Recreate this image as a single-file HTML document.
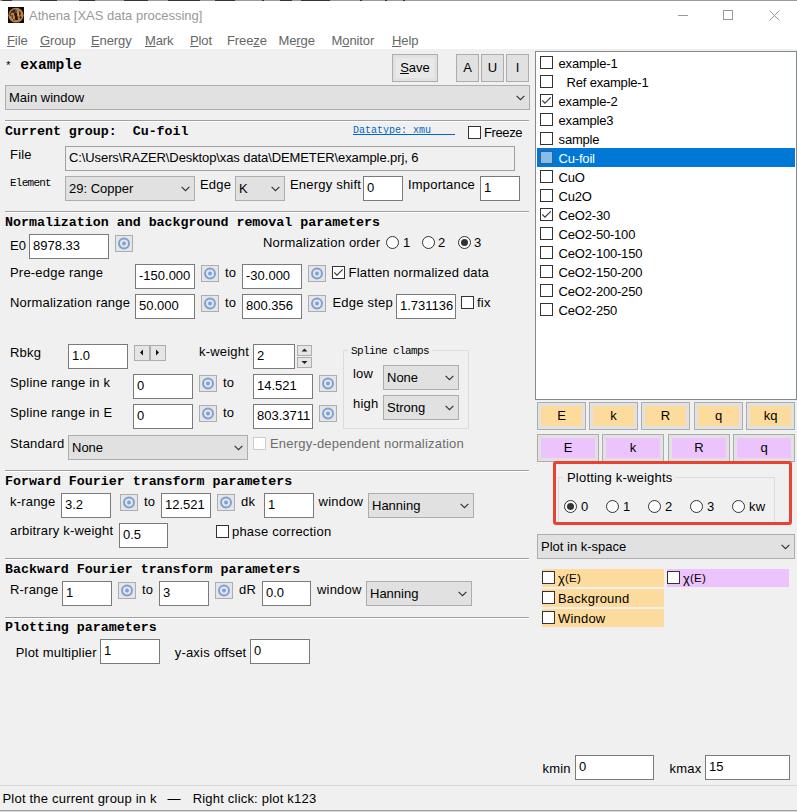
<!DOCTYPE html><html><head><meta charset="utf-8"><style>
*{box-sizing:border-box;margin:0;padding:0}
html,body{width:797px;height:812px;overflow:hidden;background:#f0f0f0}
body{position:relative;font-family:"Liberation Sans",sans-serif;font-size:13px;color:#000}
.a{position:absolute}
.t{position:absolute;white-space:pre;line-height:15px;height:15px;letter-spacing:0.2px}
.m{position:absolute;white-space:pre;font-family:"Liberation Mono",monospace;font-weight:bold;font-size:13.3px;line-height:15px}
.s{position:absolute;white-space:pre;font-family:"Liberation Mono",monospace;font-size:10px;line-height:12px}
.tb{position:absolute;background:#fff;border:1px solid #7a7a7a}
.tb span{position:absolute;left:3px;white-space:pre;line-height:15px;letter-spacing:0}
.cb{position:absolute;background:#e1e1e1;border:1px solid #adadad}
.cb span{position:absolute;left:3px;white-space:pre;line-height:15px}
.cb svg{position:absolute;right:6px;top:9px}
.pk{position:absolute;width:18px;height:17px;background:#e5e5e5;border:1px solid #adadad}
.pk svg{position:absolute;left:1px;top:1px}
.ck{position:absolute;width:13px;height:13px;background:#fff;border:1px solid #333}
.ck svg{position:absolute;left:-1px;top:-1px}
.rd{position:absolute;width:13px;height:13px;border-radius:50%;background:#fff;border:1px solid #333}
.rd i{position:absolute;left:2px;top:2px;width:7px;height:7px;border-radius:50%;background:#333}
.sep{position:absolute;height:2px;border-top:1px solid #a0a0a0;border-bottom:1px solid #fff}
.bt{position:absolute;background:#e1e1e1;border:1px solid #adadad;text-align:center}
.pb{position:absolute;border:1px solid #adadad;background:#e1e1e1}
.pb div{position:absolute;left:3px;top:3px;right:3px;bottom:3px;text-align:center;line-height:19px}
</style></head><body>
<div class="a" style="left:0;top:0;width:797px;height:49px;background:#fff"></div>
<div class="a" style="left:0;top:0;width:797px;height:1px;background:#9a9a9a"></div>
<div class="a" style="left:2px;top:0;width:10px;height:1px;background:#333"></div>
<div class="a" style="left:40px;top:0;width:17px;height:1px;background:#333"></div>
<div class="a" style="left:79px;top:0;width:16px;height:1px;background:#333"></div>
<div class="a" style="left:124px;top:0;width:24px;height:1px;background:#333"></div>
<div class="a" style="left:168px;top:0;width:32px;height:1px;background:#333"></div>
<div class="a" style="left:215px;top:0;width:20px;height:1px;background:#333"></div>
<div class="a" style="left:262px;top:0;width:2px;height:1px;background:#333"></div>
<div class="a" style="left:280px;top:0;width:12px;height:1px;background:#333"></div>
<div class="a" style="left:301px;top:0;width:29px;height:1px;background:#333"></div>
<div class="a" style="left:360px;top:0;width:2px;height:1px;background:#333"></div>
<div class="a" style="left:385px;top:0;width:2px;height:1px;background:#333"></div>
<div class="a" style="left:403px;top:0;width:2px;height:1px;background:#333"></div>
<svg class="a" style="left:8px;top:7px" width="16" height="16" viewBox="0 0 16 16"><rect width="16" height="16" fill="#0d0b0a"/><ellipse cx="8" cy="8.2" rx="7.6" ry="7.4" fill="#bb7f4a"/><path d="M2.2 9 A6 6 0 0 1 8 2.6" fill="none" stroke="#4a3020" stroke-width="1.2"/><path d="M12.5 12 L11 10 L13 9 L13.8 11 Z" fill="#3a2616"/><path d="M5 12 L6.5 12 L6.5 14 L5 13.5Z" fill="#6a4428"/><path d="M3 5 L6 3 L9 3 L9 5 L7 6 L5 6 Z" fill="#3a2616"/><path d="M6.5 6 L9.5 6 L9.5 8 L10 13 L7 13 L7 9 L6 8 Z" fill="#24170c"/><path d="M3.5 8 L5 8 L5 12 L3.8 11 Z" fill="#5a3a20"/><path d="M11 4 L13 6 L12 9 L11 8 Z" fill="#3a2616"/><path d="M9.5 6 L11 6 L11 9 L9.5 9 Z" fill="#e0a868"/><path d="M7.5 2.5 L8.5 2.5 L8.5 5 L7.5 5 Z" fill="#7a7890"/></svg>
<div class="t" style="left:29px;top:8px;color:#999;letter-spacing:0">Athena [XAS data processing]</div>
<div class="a" style="left:678px;top:15px;width:10px;height:1px;background:#999"></div>
<div class="a" style="left:723px;top:10px;width:10px;height:10px;border:1px solid #999"></div>
<svg class="a" style="left:769px;top:10px" width="11" height="11" viewBox="0 0 11 11"><path d="M0.5 0.5 L10.5 10.5 M10.5 0.5 L0.5 10.5" stroke="#999" stroke-width="1"/></svg>
<div class="t" style="left:7px;top:33px;color:#666;letter-spacing:-0.1px"><u>F</u>ile</div>
<div class="t" style="left:40px;top:33px;color:#666;letter-spacing:-0.1px"><u>G</u>roup</div>
<div class="t" style="left:91px;top:33px;color:#666;letter-spacing:-0.1px"><u>E</u>nergy</div>
<div class="t" style="left:145px;top:33px;color:#666;letter-spacing:-0.1px"><u>M</u>ark</div>
<div class="t" style="left:190px;top:33px;color:#666;letter-spacing:-0.1px"><u>P</u>lot</div>
<div class="t" style="left:227px;top:33px;color:#666;letter-spacing:-0.1px">Free<u>z</u>e</div>
<div class="t" style="left:278.5px;top:33px;color:#666;letter-spacing:-0.1px">Me<u>r</u>ge</div>
<div class="t" style="left:331.5px;top:33px;color:#666;letter-spacing:-0.1px">M<u>o</u>nitor</div>
<div class="t" style="left:392px;top:33px;color:#666;letter-spacing:-0.1px"><u>H</u>elp</div>
<div class="m" style="left:5px;top:58px;font-size:14.6px"><span style="font-weight:normal;font-size:11px">*</span> example</div>
<div class="bt" style="left:392px;top:54px;width:46px;height:28px;line-height:26px"><div class="a" style="left:3px;top:3px;width:38px;height:20px;background:#e9e9e9"></div><span style="position:relative"><u>S</u>ave</span></div>
<div class="bt" style="left:456px;top:54px;width:23px;height:28px;line-height:26px">A</div>
<div class="bt" style="left:481px;top:54px;width:23px;height:28px;line-height:26px">U</div>
<div class="bt" style="left:506px;top:54px;width:23px;height:28px;line-height:26px">I</div>
<div class="cb" style="left:5px;top:85px;width:525px;height:25px"><span style="top:4px">Main window</span><svg width="9" height="6" viewBox="0 0 9 6" style="right:4px;top:9px"><path d="M0.6 0.8 L4.5 4.6 L8.4 0.8" fill="none" stroke="#333" stroke-width="1.15"/></svg></div>
<div class="sep" style="left:5px;top:120px;width:524px"></div>
<div class="m" style="left:5px;top:124px;">Current group:  Cu-foil</div>
<div class="s" style="left:353px;top:124.6px;color:#0066cc">Datatype: xmu</div>
<div class="a" style="left:353px;top:134px;width:102px;height:1px;background:#0066cc"></div>
<div class="ck" style="left:468px;top:126px;"></div>
<div class="t" style="left:484px;top:125px;letter-spacing:-0.4px">Freeze</div>
<div class="t" style="left:10px;top:147px;">File</div>
<div class="tb" style="left:65px;top:146px;width:450px;height:25px;background:#f0f0f0;border-color:#a0a0a0"><span style="top:3px;letter-spacing:-0.1px">C:\Users\RAZER\Desktop\xas data\DEMETER\example.prj, 6</span></div>
<div class="s" style="left:10px;top:177px;font-size:11px;letter-spacing:-0.75px">Element</div>
<div class="cb" style="left:65px;top:176px;width:130px;height:25px"><span style="top:4px">29: Copper</span><svg width="9" height="6" viewBox="0 0 9 6" style="right:4px;top:9px"><path d="M0.6 0.8 L4.5 4.6 L8.4 0.8" fill="none" stroke="#333" stroke-width="1.15"/></svg></div>
<div class="t" style="left:200px;top:177px;">Edge</div>
<div class="cb" style="left:235px;top:176px;width:50px;height:25px"><span style="top:4px">K</span><svg width="9" height="6" viewBox="0 0 9 6" style="right:4px;top:9px"><path d="M0.6 0.8 L4.5 4.6 L8.4 0.8" fill="none" stroke="#333" stroke-width="1.15"/></svg></div>
<div class="t" style="left:290px;top:177px;">Energy shift</div>
<div class="tb" style="left:363px;top:176px;width:40px;height:25px;"><span style="top:3px;">0</span></div>
<div class="t" style="left:408px;top:177px;">Importance</div>
<div class="tb" style="left:480px;top:176px;width:40px;height:25px;"><span style="top:3px;">1</span></div>
<div class="sep" style="left:5px;top:211px;width:524px"></div>
<div class="m" style="left:5px;top:214.6px;">Normalization and background removal parameters</div>
<div class="t" style="left:10px;top:238px;">E0</div>
<div class="tb" style="left:29px;top:234px;width:80px;height:25px;"><span style="top:3px;">8978.33</span></div>
<div class="pk" style="left:115px;top:235px"><svg width="14" height="13" viewBox="0 0 14 13"><circle cx="7" cy="6.5" r="5" fill="none" stroke="#7aa0d8" stroke-width="1.9"/><circle cx="7" cy="6.5" r="1.9" fill="#7aa0d8"/></svg></div>
<div class="t" style="left:263px;top:235px;">Normalization order</div>
<div class="rd" style="left:386px;top:236px"></div>
<div class="t" style="left:403px;top:235px;">1</div>
<div class="rd" style="left:422px;top:236px"></div>
<div class="t" style="left:438px;top:235px;">2</div>
<div class="rd" style="left:458px;top:236px"><i></i></div>
<div class="t" style="left:474px;top:235px;">3</div>
<div class="t" style="left:10px;top:264.5px;">Pre-edge range</div>
<div class="tb" style="left:135px;top:264px;width:60px;height:25px;"><span style="top:3px;">-150.000</span></div>
<div class="pk" style="left:201px;top:265px"><svg width="14" height="13" viewBox="0 0 14 13"><circle cx="7" cy="6.5" r="5" fill="none" stroke="#7aa0d8" stroke-width="1.9"/><circle cx="7" cy="6.5" r="1.9" fill="#7aa0d8"/></svg></div>
<div class="t" style="left:225px;top:265px;">to</div>
<div class="tb" style="left:242px;top:264px;width:60px;height:25px;"><span style="top:3px;">-30.000</span></div>
<div class="pk" style="left:308px;top:265px"><svg width="14" height="13" viewBox="0 0 14 13"><circle cx="7" cy="6.5" r="5" fill="none" stroke="#7aa0d8" stroke-width="1.9"/><circle cx="7" cy="6.5" r="1.9" fill="#7aa0d8"/></svg></div>
<div class="ck" style="left:332px;top:266px;"><svg width="13" height="13" viewBox="0 0 13 13"><path d="M2.3 6.4 L4.9 9.2 L10.8 3.4" fill="none" stroke="#333" stroke-width="1.1"/></svg></div>
<div class="t" style="left:348.6px;top:265px;">Flatten normalized data</div>
<div class="t" style="left:10px;top:294.6px;">Normalization range</div>
<div class="tb" style="left:135px;top:294px;width:60px;height:25px;"><span style="top:3px;">50.000</span></div>
<div class="pk" style="left:201px;top:295px"><svg width="14" height="13" viewBox="0 0 14 13"><circle cx="7" cy="6.5" r="5" fill="none" stroke="#7aa0d8" stroke-width="1.9"/><circle cx="7" cy="6.5" r="1.9" fill="#7aa0d8"/></svg></div>
<div class="t" style="left:225px;top:295px;">to</div>
<div class="tb" style="left:242px;top:294px;width:60px;height:25px;"><span style="top:3px;">800.356</span></div>
<div class="pk" style="left:308px;top:295px"><svg width="14" height="13" viewBox="0 0 14 13"><circle cx="7" cy="6.5" r="5" fill="none" stroke="#7aa0d8" stroke-width="1.9"/><circle cx="7" cy="6.5" r="1.9" fill="#7aa0d8"/></svg></div>
<div class="t" style="left:332.5px;top:294.6px;">Edge step</div>
<div class="tb" style="left:396px;top:294px;width:60px;height:25px;"><span style="top:3px;">1.731136</span></div>
<div class="ck" style="left:461px;top:296px;"></div>
<div class="t" style="left:477px;top:294.6px;">fix</div>
<div class="t" style="left:10px;top:345px;">Rbkg</div>
<div class="tb" style="left:68px;top:344px;width:60px;height:25px;"><span style="top:3px;">1.0</span></div>
<div class="a" style="left:134px;top:345px;width:32px;height:16px;background:#e5e5e5;border:1px solid #adadad"></div>
<div class="a" style="left:149px;top:346px;width:2px;height:14px;background:#adadad"></div>
<svg class="a" style="left:134px;top:345px" width="32" height="16" viewBox="0 0 32 16"><path d="M9 4.5 L6 7.5 L9 10.5Z M22 4.5 L25 7.5 L22 10.5Z" fill="#111"/></svg>
<div class="t" style="left:199px;top:344px;">k-weight</div>
<div class="tb" style="left:253px;top:344px;width:42px;height:25px;"><span style="top:3px;">2</span></div>
<div class="a" style="left:297px;top:345px;width:15px;height:11px;background:#e5e5e5;border:1px solid #adadad"></div>
<div class="a" style="left:297px;top:357px;width:15px;height:11px;background:#e5e5e5;border:1px solid #adadad"></div>
<svg class="a" style="left:297px;top:345px" width="15" height="23" viewBox="0 0 15 23"><path d="M4.5 6.5 L7.5 3.5 L10.5 6.5Z M4.5 16 L7.5 19 L10.5 16Z" fill="#222"/></svg>
<div class="a" style="left:343px;top:350px;width:126px;height:79px;border:1px solid #dcdcdc"></div>
<div class="a" style="left:348px;top:345px;width:84px;height:12px;background:#f0f0f0"></div>
<div class="s" style="left:351px;top:345.3px;font-size:11px;letter-spacing:-0.6px">Spline clamps</div>
<div class="t" style="left:353px;top:366px;">low</div>
<div class="cb" style="left:383px;top:365px;width:76px;height:25px"><span style="top:4px">None</span><svg width="9" height="6" viewBox="0 0 9 6" style="right:4px;top:9px"><path d="M0.6 0.8 L4.5 4.6 L8.4 0.8" fill="none" stroke="#333" stroke-width="1.15"/></svg></div>
<div class="t" style="left:353px;top:396px;">high</div>
<div class="cb" style="left:383px;top:395px;width:76px;height:25px"><span style="top:4px">Strong</span><svg width="9" height="6" viewBox="0 0 9 6" style="right:4px;top:9px"><path d="M0.6 0.8 L4.5 4.6 L8.4 0.8" fill="none" stroke="#333" stroke-width="1.15"/></svg></div>
<div class="t" style="left:10px;top:375px;">Spline range in k</div>
<div class="tb" style="left:133px;top:374px;width:60px;height:25px;"><span style="top:3px;">0</span></div>
<div class="pk" style="left:199px;top:375px"><svg width="14" height="13" viewBox="0 0 14 13"><circle cx="7" cy="6.5" r="5" fill="none" stroke="#7aa0d8" stroke-width="1.9"/><circle cx="7" cy="6.5" r="1.9" fill="#7aa0d8"/></svg></div>
<div class="t" style="left:223px;top:375px;">to</div>
<div class="tb" style="left:253px;top:374px;width:60px;height:25px;"><span style="top:3px;">14.521</span></div>
<div class="pk" style="left:319px;top:375px"><svg width="14" height="13" viewBox="0 0 14 13"><circle cx="7" cy="6.5" r="5" fill="none" stroke="#7aa0d8" stroke-width="1.9"/><circle cx="7" cy="6.5" r="1.9" fill="#7aa0d8"/></svg></div>
<div class="t" style="left:10px;top:405px;">Spline range in E</div>
<div class="tb" style="left:133px;top:404px;width:60px;height:25px;"><span style="top:3px;">0</span></div>
<div class="pk" style="left:199px;top:405px"><svg width="14" height="13" viewBox="0 0 14 13"><circle cx="7" cy="6.5" r="5" fill="none" stroke="#7aa0d8" stroke-width="1.9"/><circle cx="7" cy="6.5" r="1.9" fill="#7aa0d8"/></svg></div>
<div class="t" style="left:223px;top:405px;">to</div>
<div class="tb" style="left:253px;top:404px;width:60px;height:25px;"><span style="top:3px;">803.3711</span></div>
<div class="pk" style="left:319px;top:405px"><svg width="14" height="13" viewBox="0 0 14 13"><circle cx="7" cy="6.5" r="5" fill="none" stroke="#7aa0d8" stroke-width="1.9"/><circle cx="7" cy="6.5" r="1.9" fill="#7aa0d8"/></svg></div>
<div class="t" style="left:10px;top:436px;">Standard</div>
<div class="cb" style="left:68px;top:435px;width:180px;height:25px"><span style="top:4px">None</span><svg width="9" height="6" viewBox="0 0 9 6" style="right:4px;top:9px"><path d="M0.6 0.8 L4.5 4.6 L8.4 0.8" fill="none" stroke="#333" stroke-width="1.15"/></svg></div>
<div class="ck" style="left:253px;top:437px;border-color:#cccccc"></div>
<div class="t" style="left:270px;top:436px;color:#6d6d6d">Energy-dependent normalization</div>
<div class="sep" style="left:5px;top:470px;width:524px"></div>
<div class="m" style="left:5px;top:474px;">Forward Fourier transform parameters</div>
<div class="t" style="left:10px;top:494.4px;">k-range</div>
<div class="tb" style="left:61px;top:493px;width:50px;height:25px;"><span style="top:3px;">3.2</span></div>
<div class="pk" style="left:120px;top:494px"><svg width="14" height="13" viewBox="0 0 14 13"><circle cx="7" cy="6.5" r="5" fill="none" stroke="#7aa0d8" stroke-width="1.9"/><circle cx="7" cy="6.5" r="1.9" fill="#7aa0d8"/></svg></div>
<div class="t" style="left:144px;top:494px;">to</div>
<div class="tb" style="left:161px;top:493px;width:50px;height:25px;"><span style="top:3px;">12.521</span></div>
<div class="pk" style="left:217px;top:494px"><svg width="14" height="13" viewBox="0 0 14 13"><circle cx="7" cy="6.5" r="5" fill="none" stroke="#7aa0d8" stroke-width="1.9"/><circle cx="7" cy="6.5" r="1.9" fill="#7aa0d8"/></svg></div>
<div class="t" style="left:241px;top:494px;">dk</div>
<div class="tb" style="left:264px;top:493px;width:50px;height:25px;"><span style="top:3px;">1</span></div>
<div class="t" style="left:318.6px;top:494px;">window</div>
<div class="cb" style="left:368px;top:493px;width:106px;height:25px"><span style="top:4px">Hanning</span><svg width="9" height="6" viewBox="0 0 9 6" style="right:4px;top:9px"><path d="M0.6 0.8 L4.5 4.6 L8.4 0.8" fill="none" stroke="#333" stroke-width="1.15"/></svg></div>
<div class="t" style="left:10px;top:523.3px;">arbitrary k-weight</div>
<div class="tb" style="left:119px;top:523px;width:49px;height:25px;"><span style="top:3px;">0.5</span></div>
<div class="ck" style="left:216px;top:525px;"></div>
<div class="t" style="left:232px;top:524px;">phase correction</div>
<div class="sep" style="left:5px;top:558px;width:524px"></div>
<div class="m" style="left:5px;top:562px;">Backward Fourier transform parameters</div>
<div class="t" style="left:10px;top:582.3px;">R-range</div>
<div class="tb" style="left:62px;top:581px;width:50px;height:25px;"><span style="top:3px;">1</span></div>
<div class="pk" style="left:118px;top:582px"><svg width="14" height="13" viewBox="0 0 14 13"><circle cx="7" cy="6.5" r="5" fill="none" stroke="#7aa0d8" stroke-width="1.9"/><circle cx="7" cy="6.5" r="1.9" fill="#7aa0d8"/></svg></div>
<div class="t" style="left:142px;top:582px;">to</div>
<div class="tb" style="left:159px;top:581px;width:50px;height:25px;"><span style="top:3px;">3</span></div>
<div class="pk" style="left:215px;top:582px"><svg width="14" height="13" viewBox="0 0 14 13"><circle cx="7" cy="6.5" r="5" fill="none" stroke="#7aa0d8" stroke-width="1.9"/><circle cx="7" cy="6.5" r="1.9" fill="#7aa0d8"/></svg></div>
<div class="t" style="left:239px;top:582px;">dR</div>
<div class="tb" style="left:262px;top:581px;width:49px;height:25px;"><span style="top:3px;">0.0</span></div>
<div class="t" style="left:317px;top:582px;">window</div>
<div class="cb" style="left:366px;top:581px;width:106px;height:25px"><span style="top:4px">Hanning</span><svg width="9" height="6" viewBox="0 0 9 6" style="right:4px;top:9px"><path d="M0.6 0.8 L4.5 4.6 L8.4 0.8" fill="none" stroke="#333" stroke-width="1.15"/></svg></div>
<div class="sep" style="left:5px;top:617px;width:524px"></div>
<div class="m" style="left:5px;top:620px;">Plotting parameters</div>
<div class="t" style="left:15.7px;top:645px;">Plot multiplier</div>
<div class="tb" style="left:100px;top:639px;width:60px;height:25px;"><span style="top:3px;">1</span></div>
<div class="t" style="left:174.7px;top:645px;">y-axis offset</div>
<div class="tb" style="left:250px;top:639px;width:60px;height:25px;"><span style="top:3px;">0</span></div>
<div class="a" style="left:0;top:785px;width:797px;height:1px;background:#d5d5d5"></div>
<div class="t" style="left:2.5px;top:790.7px;">Plot the current group in k</div>
<div class="t" style="left:167.6px;top:790.7px;">—</div>
<div class="t" style="left:192.7px;top:790.7px;">Right click: plot k123</div>
<div class="a" style="left:0;top:810px;width:797px;height:1px;background:#a0a0a0"></div>
<div class="a" style="left:0;top:811px;width:797px;height:1px;background:#d8d8d8"></div>
<div class="a" style="left:535px;top:51px;width:262px;height:349px;background:#fff;border:1px solid #828790;border-right:none"></div>
<div class="a" style="left:796px;top:51px;width:1px;height:349px;background:#828790"></div>
<div class="ck" style="left:540px;top:56px;"></div>
<div class="t" style="left:558.6px;top:55.5px;letter-spacing:-0.2px">example-1</div>
<div class="ck" style="left:540px;top:75px;"></div>
<div class="t" style="left:566.6px;top:74.5px;letter-spacing:-0.2px">Ref example-1</div>
<div class="ck" style="left:540px;top:94px;"><svg width="13" height="13" viewBox="0 0 13 13"><path d="M2.3 6.4 L4.9 9.2 L10.8 3.4" fill="none" stroke="#333" stroke-width="1.1"/></svg></div>
<div class="t" style="left:558.6px;top:93.5px;letter-spacing:-0.2px">example-2</div>
<div class="ck" style="left:540px;top:113px;"></div>
<div class="t" style="left:558.6px;top:112.5px;letter-spacing:-0.2px">example3</div>
<div class="ck" style="left:540px;top:132px;"></div>
<div class="t" style="left:558.6px;top:131.5px;letter-spacing:-0.2px">sample</div>
<div class="a" style="left:537px;top:148px;width:258px;height:19px;background:#0078d7"></div>
<div class="ck" style="left:540px;top:151px;background:#88bdea;border-color:#3a5f85"></div>
<div class="t" style="left:558.6px;top:150.5px;color:#fff;letter-spacing:-0.2px">Cu-foil</div>
<div class="ck" style="left:540px;top:170px;"></div>
<div class="t" style="left:558.6px;top:169.5px;letter-spacing:-0.2px">CuO</div>
<div class="ck" style="left:540px;top:189px;"></div>
<div class="t" style="left:558.6px;top:188.5px;letter-spacing:-0.2px">Cu2O</div>
<div class="ck" style="left:540px;top:208px;"><svg width="13" height="13" viewBox="0 0 13 13"><path d="M2.3 6.4 L4.9 9.2 L10.8 3.4" fill="none" stroke="#333" stroke-width="1.1"/></svg></div>
<div class="t" style="left:558.6px;top:207.5px;letter-spacing:-0.2px">CeO2-30</div>
<div class="ck" style="left:540px;top:227px;"></div>
<div class="t" style="left:558.6px;top:226.5px;letter-spacing:-0.2px">CeO2-50-100</div>
<div class="ck" style="left:540px;top:246px;"></div>
<div class="t" style="left:558.6px;top:245.5px;letter-spacing:-0.2px">CeO2-100-150</div>
<div class="ck" style="left:540px;top:265px;"></div>
<div class="t" style="left:558.6px;top:264.5px;letter-spacing:-0.2px">CeO2-150-200</div>
<div class="ck" style="left:540px;top:284px;"></div>
<div class="t" style="left:558.6px;top:283.5px;letter-spacing:-0.2px">CeO2-200-250</div>
<div class="ck" style="left:540px;top:303px;"></div>
<div class="t" style="left:558.6px;top:302.5px;letter-spacing:-0.2px">CeO2-250</div>
<div class="pb" style="left:537px;top:402px;width:49px;height:28px"><div style="background:#fddb9c">E</div></div>
<div class="pb" style="left:589px;top:402px;width:49px;height:28px"><div style="background:#fddb9c">k</div></div>
<div class="pb" style="left:641px;top:402px;width:49px;height:28px"><div style="background:#fddb9c">R</div></div>
<div class="pb" style="left:694px;top:402px;width:49px;height:28px"><div style="background:#fddb9c">q</div></div>
<div class="pb" style="left:746px;top:402px;width:49px;height:28px"><div style="background:#fddb9c">kq</div></div>
<div class="pb" style="left:537px;top:434px;width:62px;height:28px"><div style="background:#ecc3fc">E</div></div>
<div class="pb" style="left:602px;top:434px;width:62px;height:28px"><div style="background:#ecc3fc">k</div></div>
<div class="pb" style="left:668px;top:434px;width:62px;height:28px"><div style="background:#ecc3fc">R</div></div>
<div class="pb" style="left:733px;top:434px;width:62px;height:28px"><div style="background:#ecc3fc">q</div></div>
<div class="a" style="left:558px;top:477px;width:217px;height:47px;border:1px solid #dcdcdc"></div>
<div class="a" style="left:563px;top:470px;width:112px;height:14px;background:#f0f0f0"></div>
<div class="t" style="left:567px;top:470px;">Plotting k-weights</div>
<div class="rd" style="left:564px;top:500px"><i></i></div>
<div class="t" style="left:581px;top:499px;">0</div>
<div class="rd" style="left:606px;top:500px"></div>
<div class="t" style="left:623px;top:499px;">1</div>
<div class="rd" style="left:648px;top:500px"></div>
<div class="t" style="left:665px;top:499px;">2</div>
<div class="rd" style="left:690px;top:500px"></div>
<div class="t" style="left:707px;top:499px;">3</div>
<div class="rd" style="left:732px;top:500px"></div>
<div class="t" style="left:749px;top:499px;">kw</div>
<div class="a" style="left:553px;top:461px;width:239px;height:64px;border:3px solid #e94235;border-radius:3px"></div>
<div class="a" style="left:537px;top:526px;width:260px;height:6px;background:#f0f0f0"></div>
<div class="cb" style="left:537px;top:534px;width:258px;height:25px"><span style="top:4px">Plot in k-space</span><svg width="9" height="6" viewBox="0 0 9 6" style="right:4px;top:9px"><path d="M0.6 0.8 L4.5 4.6 L8.4 0.8" fill="none" stroke="#333" stroke-width="1.15"/></svg></div>
<div class="a" style="left:542px;top:569px;width:122px;height:18px;background:#fddb9c"></div>
<div class="ck" style="left:542px;top:571px;"></div>
<div class="t" style="left:558px;top:571px;">χ<span style="font-size:11.5px;position:relative;top:-1px">(E)</span></div>
<div class="a" style="left:542px;top:589px;width:122px;height:18px;background:#fddb9c"></div>
<div class="ck" style="left:542px;top:591px;"></div>
<div class="t" style="left:558px;top:591px;">Background</div>
<div class="a" style="left:542px;top:609px;width:122px;height:18px;background:#fddb9c"></div>
<div class="ck" style="left:542px;top:611px;"></div>
<div class="t" style="left:558px;top:611px;">Window</div>
<div class="a" style="left:667px;top:569px;width:122px;height:18px;background:#ecc3fc"></div>
<div class="ck" style="left:667px;top:571px;"></div>
<div class="t" style="left:683px;top:571px;">χ<span style="font-size:11.5px;position:relative;top:-1px">(E)</span></div>
<div class="t" style="left:542.5px;top:761px;">kmin</div>
<div class="tb" style="left:575px;top:755px;width:79px;height:25px;"><span style="top:3px;">0</span></div>
<div class="t" style="left:669.5px;top:761px;">kmax</div>
<div class="tb" style="left:705px;top:755px;width:85px;height:25px;"><span style="top:3px;">15</span></div>
</body></html>
